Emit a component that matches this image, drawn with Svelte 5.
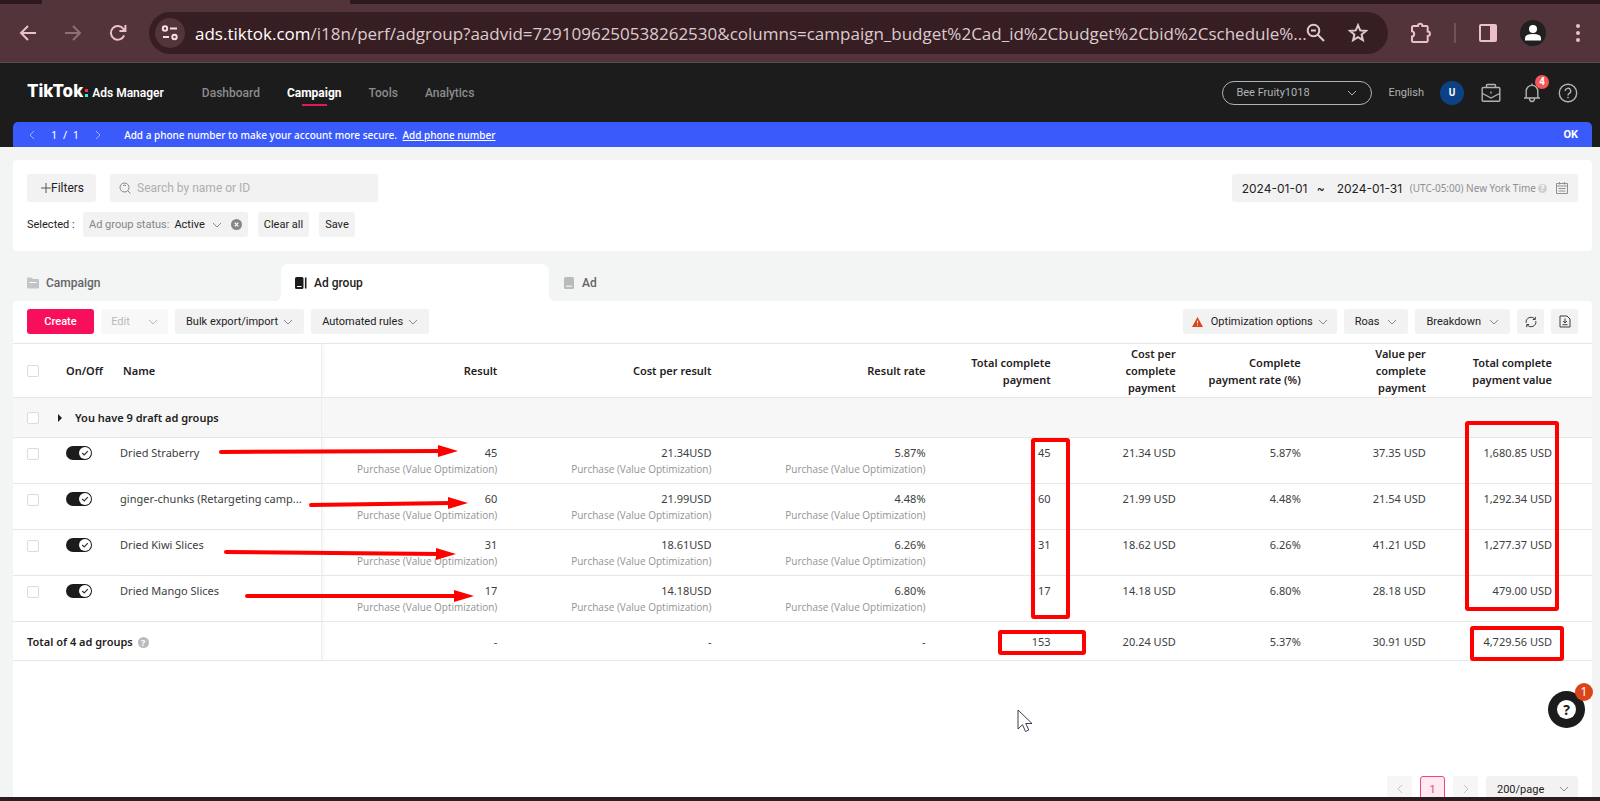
<script lang="ts">
	type Row = {
		name: string;
		result: string;
		cost: string;
		rate: string;
		cells: string[];
	};

	const navItems = ['Dashboard', 'Campaign', 'Tools', 'Analytics'];
	const goal = 'Purchase (Value Optimization)';
	const metricHeads = [
		'Total complete payment',
		'Cost per complete payment',
		'Complete payment rate (%)',
		'Value per complete payment',
		'Total complete payment value'
	];

	const rows: Row[] = [
		{
			name: 'Dried Straberry',
			result: '45',
			cost: '21.34USD',
			rate: '5.87%',
			cells: ['45', '21.34 USD', '5.87%', '37.35 USD', '1,680.85 USD']
		},
		{
			name: 'ginger-chunks (Retargeting camp...',
			result: '60',
			cost: '21.99USD',
			rate: '4.48%',
			cells: ['60', '21.99 USD', '4.48%', '21.54 USD', '1,292.34 USD']
		},
		{
			name: 'Dried Kiwi Slices',
			result: '31',
			cost: '18.61USD',
			rate: '6.26%',
			cells: ['31', '18.62 USD', '6.26%', '41.21 USD', '1,277.37 USD']
		},
		{
			name: 'Dried Mango Slices',
			result: '17',
			cost: '14.18USD',
			rate: '6.80%',
			cells: ['17', '14.18 USD', '6.80%', '28.18 USD', '479.00 USD']
		}
	];
	const totals = ['153', '20.24 USD', '5.37%', '30.91 USD', '4,729.56 USD'];

	// annotation marks, relative to the top left of the table
	const arrows = [
		{ x1: 208, y1: 109, x2: 445, y2: 108 },
		{ x1: 298, y1: 162, x2: 455, y2: 160 },
		{ x1: 213, y1: 209, x2: 443, y2: 211 },
		{ x1: 234, y1: 253, x2: 461, y2: 253 }
	];
	const boxes = [
		{ x: 1020, y: 97, w: 35, h: 177 },
		{ x: 1454, y: 80, w: 90, h: 186 },
		{ x: 987, y: 289, w: 84, h: 21 },
		{ x: 1459, y: 285, w: 90, h: 31 }
	];

	let search = $state('');
	let startDate = $state('2024-01-01');
	let endDate = $state('2024-01-31');
	let enabled = $state(rows.map(() => true));
</script>

{#snippet chevron()}
	<svg class="chevron" viewBox="0 0 10 10" width="10" height="10" aria-hidden="true">
		<path d="M1 3 5 7 9 3" />
	</svg>
{/snippet}

<div class="window">
	<div class="browser">
		<div class="tab-strip"></div>
		<div class="toolbar">
			<div class="nav-tools">
				<button class="tool" aria-label="Back">
					<svg viewBox="0 0 18 18" width="18" height="18"><path d="M17 9H2M9 2 2 9l7 7" /></svg>
				</button>
				<button class="tool dim" aria-label="Forward">
					<svg viewBox="0 0 18 18" width="18" height="18"><path d="M1 9h15M9 2l7 7-7 7" /></svg>
				</button>
				<button class="tool" aria-label="Reload">
					<svg viewBox="0 0 18 18" width="18" height="18">
						<path d="M15.2 11.4A6.9 6.9 0 1 1 14.4 4.8L16 6.4M16.4 1v6h-6" />
					</svg>
				</button>
			</div>
			<div class="url-bar">
				<button class="site-info" aria-label="Site information">
					<svg viewBox="0 0 18 16" width="18" height="16">
						<circle cx="4" cy="3.5" r="2.2" /><path d="M9 3.5h7M2 12h6" /><circle cx="13.5" cy="12" r="2.2" />
					</svg>
				</button>
				<p class="url">ads.tiktok.com<span>/i18n/perf/adgroup?aadvid=7291096250538262530&columns=campaign_budget%2Cad_id%2Cbudget%2Cbid%2Cschedule%...</span></p>
				<div class="url-tools">
					<button class="tool light" aria-label="Zoom">
						<svg viewBox="0 0 20 20" width="20" height="20"><circle cx="7.5" cy="7.5" r="5.8" /><path d="M5 7.5h5M11.8 11.8 18 18" /></svg>
					</button>
					<button class="tool light" aria-label="Bookmark this page">
						<svg viewBox="0 0 20 20" width="20" height="20">
							<path d="m10 2.2 2.2 5.2 5.7.5-4.3 3.7 1.3 5.6-4.9-3-4.9 3 1.3-5.6-4.3-3.7 5.7-.5z" />
						</svg>
					</button>
				</div>
			</div>
			<div class="browser-tools">
				<button class="tool" aria-label="Extensions">
					<svg viewBox="0 0 22 22" width="22" height="22">
						<path d="M2 5.5Q2 4 3.500 4H8a2.200 2.200 0 0 1 4.400 0h4.100q1.200 0 1.200 1.200v4.300a2.200 2.200 0 0 1 0 4.400v4.900q0 1.200-1.200 1.200H3.200Q2 20 2 18.800v-4.200a2.700 2.700 0 0 0 0-5.300z" />
					</svg>
				</button>
				<span class="divider"></span>
				<button class="tool" aria-label="Side panel">
					<svg viewBox="0 0 20 20" width="20" height="20"><rect x="2" y="2" width="16" height="16" rx="1" /><path class="solid" d="M12 2h6v16h-6z" /></svg>
				</button>
				<button class="tool" aria-label="Profile">
					<svg class="profile" viewBox="0 0 26 26" width="26" height="26">
						<circle cx="13" cy="13" r="13" fill="#202020" /><circle cx="13" cy="9" r="4" fill="#fff" />
						<path d="M5 20.5V18q0-4 8-4t8 4v2.500z" fill="#fff" />
					</svg>
				</button>
			</div>
			<button class="tool" aria-label="Menu">
				<svg class="dots" viewBox="0 0 6 20" width="6" height="20"><circle cx="3" cy="3" r="2" /><circle cx="3" cy="10" r="2" /><circle cx="3" cy="17" r="2" /></svg>
			</button>
		</div>
	</div>

	<header>
		<div class="masthead">
			<a class="logo" href="#home"><b>TikTok</b><i></i><span>Ads Manager</span></a>
			<nav>
				{#each navItems as item}
					<a href={`#${item.toLowerCase()}`} class:current={item === 'Campaign'}>{item}</a>
				{/each}
			</nav>
			<div class="account">
				<label class="account-picker">
					<select aria-label="Account"><option>Bee Fruity1018</option></select>
					{@render chevron()}
				</label>
				<button class="lang">English</button>
				<button class="avatar">U</button>
				<button class="head-icon" aria-label="Business center">
					<svg viewBox="0 0 20 20" width="20" height="20">
						<path d="M5.500 4.500v-2q0-1 1-1h7q1 0 1 1v2M2.200 4.500h15.600q1 0 1 1v11.700q0 1-1 1H2.200q-1 0-1-1V5.500q0-1 1-1zM1.500 10.500 10 15l8.500-4.500M10 8.500v2" />
					</svg>
				</button>
				<button class="head-icon bell" aria-label="Notifications">
					<svg viewBox="0 0 18 20" width="18" height="20">
						<path d="M3.200 15V8.200a5.800 5.800 0 0 1 11.600 0V15M1 15h16M6.500 15.500a2.500 3 0 0 0 5 0M9 2.200V.5" />
					</svg>
					<span class="count">4</span>
				</button>
				<button class="head-icon" aria-label="Help">
					<svg viewBox="0 0 20 20" width="20" height="20">
						<circle cx="10" cy="10" r="8.700" /><path d="M7.300 8a2.700 2.700 0 1 1 4 2.400q-1.300.7-1.300 2M10 13.700v1.500" />
					</svg>
				</button>
			</div>
		</div>
		<div class="notice">
			<button aria-label="Previous notice"><svg viewBox="0 0 10 10" width="10" height="10"><path d="M7 1 3 5l4 4" /></svg></button>
			<span class="pos">1&nbsp; / &nbsp;1</span>
			<button aria-label="Next notice"><svg viewBox="0 0 10 10" width="10" height="10"><path d="m3 1 4 4-4 4" /></svg></button>
			<p>Add a phone number to make your account more secure. <a href="#phone">Add phone number</a></p>
			<button class="ok">OK</button>
		</div>
	</header>

	<main>
		<section class="filters">
			<div class="filter-row">
				<button class="filter-btn">
					<svg viewBox="0 0 10 10" width="10" height="10"><path d="M5 0v10M0 5h10" /></svg>Filters
				</button>
				<label class="search">
					<svg viewBox="0 0 12 12" width="12" height="12"><circle cx="5.500" cy="5.500" r="4.500" /><path d="m8.800 8.800 2.700 2.700M4 3.600q1.500-.8 3 0" /></svg>
					<input type="text" placeholder="Search by name or ID" aria-label="Search by name or ID" bind:value={search} />
				</label>
				<div class="dates">
					<input type="text" aria-label="Start date" bind:value={startDate} />
					<span>~</span>
					<input type="text" aria-label="End date" bind:value={endDate} />
					<small>(UTC-05:00) New York Time</small>
					<i class="hint">?</i>
					<svg class="calendar" viewBox="0 0 12 12" width="12" height="12"><path d="M.5 1.500h11v10H.5zM.5 4h11M3.500 0v2.500M8.500 0v2.500M2.500 6.500h7M2.500 9h7" /></svg>
				</div>
			</div>
			<div class="selected-row">
				<span>Selected :</span>
				<div class="chip">
					<em>Ad group status:</em>
					<button class="plain">Active {@render chevron()}</button>
					<button class="plain" aria-label="Remove filter">
						<svg viewBox="0 0 12 12" width="11" height="11"><circle cx="6" cy="6" r="6" fill="#848687" /><path d="m4 4 4 4M8 4 4 8" stroke="#fff" stroke-width="1.400" /></svg>
					</button>
				</div>
				<button class="mini">Clear all</button>
				<button class="mini">Save</button>
			</div>
		</section>

		<div class="tabs">
			<a href="#campaigns">
				<svg viewBox="0 0 12 12" width="12" height="12"><path d="M0 1.500Q0 .5 1 .5h3.500L6 2h5q1 0 1 1v7.500q0 1-1 1H1q-1 0-1-1z" fill="#c3c4c5" /><path d="M2.500 5.500h7" stroke="#fff" /></svg>
				Campaign
			</a>
			<a class="active" href="#adgroups">
				<svg viewBox="0 0 12 12" width="12" height="12"><rect width="8.500" height="12" rx="1.500" fill="#1c1c1c" /><path d="M2 9.500h4.500" stroke="#fff" /><path d="M10.700.5v11" stroke="#1c1c1c" stroke-width="1.600" /></svg>
				Ad group
			</a>
			<a href="#ads">
				<svg viewBox="0 0 12 12" width="12" height="12"><rect x="1" width="10" height="12" rx="1.500" fill="#b9babb" /><path d="M3 9.200h6" stroke="#fff" /></svg>
				Ad
			</a>
		</div>

		<section class="content">
			<div class="actions">
				<button class="create">Create</button>
				<button class="edit" disabled>Edit {@render chevron()}</button>
				<button class="wide">Bulk export/import {@render chevron()}</button>
				<button class="wide">Automated rules {@render chevron()}</button>
				<span class="spacer"></span>
				<button class="warn">
					<svg viewBox="0 0 12 11" width="11" height="10"><path d="M6 0 12 11H0z" fill="#d9441b" /><path d="M6 4v3M6 8.300v1.200" stroke="#fff" /></svg>
					Optimization options {@render chevron()}
				</button>
				<button class="wide roomy">Roas {@render chevron()}</button>
				<button class="wide roomy">Breakdown {@render chevron()}</button>
				<button class="square" aria-label="Refresh">
					<svg viewBox="0 0 12 12" width="12" height="12"><path d="M1.200 7A4.900 4.900 0 0 1 9.800 3M10.300.8v2.700H7.800M10.800 5A4.900 4.900 0 0 1 2.200 9M1.700 11.200V8.500h2.500" /></svg>
				</button>
				<button class="square" aria-label="Export">
					<svg viewBox="0 0 12 13" width="12" height="13"><path d="M1 1h7l3 3v8H1zM6 3.500V8M4 6l2 2 2-2M3.500 9.700h5" /></svg>
				</button>
			</div>

			<div class="table-wrap">
				<table>
					<colgroup>
						<col class="c-check" /><col class="c-toggle" /><col class="c-name" />
						<col class="c-result" /><col class="c-wide" /><col class="c-wide" />
						<col class="c-metric" /><col class="c-metric" /><col class="c-metric" /><col class="c-metric" /><col class="c-last" />
					</colgroup>
					<thead>
						<tr>
							<th><input type="checkbox" aria-label="Select all" /></th>
							<th class="onoff">On/Off</th>
							<th class="name pinned">Name</th>
							<th class="num">Result</th>
							<th class="num">Cost per result</th>
							<th class="num">Result rate</th>
							{#each metricHeads as head}
								<th class="num">{head}</th>
							{/each}
						</tr>
					</thead>
					<tbody>
						<tr class="draft">
							<td><input type="checkbox" aria-label="Select drafts" /></td>
							<td class="pinned" colspan="2">
								<button class="expand">
									<svg viewBox="0 0 4 8" width="4" height="8"><path d="m0 0 4 4-4 4z" /></svg>You have 9 draft ad groups
								</button>
							</td>
							<td colspan="8"></td>
						</tr>
						{#each rows as row, i}
							<tr class="item">
								<td><input type="checkbox" aria-label={`Select ${row.name}`} /></td>
								<td>
									<label class="switch">
										<input type="checkbox" role="switch" aria-label={`${row.name} on or off`} bind:checked={enabled[i]} />
										<svg viewBox="0 0 26 14" width="26" height="14">
											<rect width="26" height="14" rx="7" fill="#1c1c1c" /><circle cx="19" cy="7" r="6" fill="#fff" />
											<path d="m16.200 7 2 2 3.600-3.800" stroke="#333" stroke-width="1.200" />
										</svg>
									</label>
								</td>
								<td class="pinned">{row.name}</td>
								{#each [row.result, row.cost, row.rate] as value}
									<td class="num">{value}<small>{goal}</small></td>
								{/each}
								{#each row.cells as value}
									<td class="num">{value}</td>
								{/each}
							</tr>
						{/each}
					</tbody>
					<tfoot>
						<tr>
							<td class="pinned total" colspan="3">Total of 4 ad groups <i class="hint big">?</i></td>
							<td class="num">-</td>
							<td class="num">-</td>
							<td class="num">-</td>
							{#each totals as value}
								<td class="num">{value}</td>
							{/each}
						</tr>
					</tfoot>
				</table>

				<svg class="marks" aria-hidden="true">
					{#each arrows as a}
						<line x1={a.x1} y1={a.y1} x2={a.x2 - 16} y2={a.y2} />
						<polygon points={`${a.x2 - 20},${a.y2 - 6} ${a.x2},${a.y2} ${a.x2 - 20},${a.y2 + 6}`} />
					{/each}
					{#each boxes as b}
						<rect x={b.x} y={b.y} width={b.w} height={b.h} rx="1" />
					{/each}
				</svg>
			</div>

			<div class="pager">
				<button class="page off" aria-label="Previous page"><svg viewBox="0 0 10 10" width="10" height="10"><path d="M7 1 3 5l4 4" /></svg></button>
				<button class="page on">1</button>
				<button class="page off" aria-label="Next page"><svg viewBox="0 0 10 10" width="10" height="10"><path d="m3 1 4 4-4 4" /></svg></button>
				<label class="page-size">
					<select aria-label="Rows per page"><option>200/page</option></select>
					{@render chevron()}
				</label>
			</div>
		</section>

		<button class="support" aria-label="Support">
			<span class="bubble">?</span>
			<span class="badge">1</span>
		</button>
		<svg class="cursor" viewBox="0 0 16 24" width="16" height="24" aria-hidden="true">
			<path d="M1 1v19l4.500-4.300 3 6.800 3.300-1.500-3-6.500H15z" />
		</svg>
	</main>
	<div class="taskbar"></div>
</div>

<style>
	:global(body) {
		background: #f3f4f4;
	}

	.window {
		display: flex;
		flex-direction: column;
		height: 100vh;
		font-family: 'Noto Sans', 'Open Sans', sans-serif;
		font-size: 11px;
		color: #1f2122;
	}

	button,
	input,
	select {
		font: inherit;
		color: inherit;
		margin: 0;
		padding: 0;
		border: 0;
		background: none;
		white-space: nowrap;
	}

	a {
		color: inherit;
		text-decoration: none;
	}

	p {
		margin: 0;
	}

	svg {
		fill: none;
		stroke: none;
		flex: none;
	}

	.chevron {
		stroke: #8a8b8d;
	}

	/* browser bar */
	.browser {
		background: #52343a;
		border-bottom: 1px solid #584b4d;
	}

	.tab-strip {
		height: 4px;
		background: linear-gradient(90deg, #2e191e 42px, #52343a 42px 350px, #2e191e 350px);
	}

	.toolbar {
		display: flex;
		align-items: center;
		height: 58px;
		padding: 0 19px;
	}

	.nav-tools,
	.url-tools,
	.browser-tools {
		display: flex;
		align-items: center;
		gap: 27px;
	}

	.url-tools,
	.browser-tools {
		gap: 22px;
	}

	.browser-tools {
		margin-right: 29px;
	}

	.tool {
		display: flex;
	}

	.tool svg {
		stroke: #eebfc8;
		stroke-width: 2;
	}

	.tool .solid,
	.tool .dots {
		fill: #eebfc8;
		stroke: none;
	}

	.tool .profile {
		stroke: none;
	}

	.tool.dim svg {
		stroke: #8f6f76;
	}

	.tool.light svg {
		stroke: #dccbce;
	}

	.url-bar {
		flex: 1;
		display: flex;
		align-items: center;
		min-width: 0;
		height: 42px;
		padding: 0 20px 0 6px;
		margin: 0 22px;
		border-radius: 21px;
		background: #371e23;
	}

	.site-info {
		display: flex;
		align-items: center;
		justify-content: center;
		width: 30px;
		height: 30px;
		border-radius: 50%;
		background: #52343a;
	}

	.site-info svg {
		stroke: #f5dfe3;
		stroke-width: 2;
	}

	.url {
		flex: 1;
		min-width: 0;
		white-space: nowrap;
		margin-left: 10px;
		font-family: 'Open Sans', sans-serif;
		font-size: 17px;
		color: #fff;
	}

	.url span {
		color: #dccbce;
	}

	.divider {
		width: 2px;
		height: 20px;
		background: #70535a;
	}

	/* header */
	header {
		background: #1c1c1c;
		padding: 0 8px 0 13px;
		font-family: Roboto, 'Open Sans', sans-serif;
	}

	.masthead {
		display: flex;
		align-items: center;
		height: 59px;
		padding: 0 14px;
	}

	.logo {
		display: flex;
		align-items: baseline;
		padding-bottom: 3px;
		color: #fff;
		font-size: 12px;
		font-weight: 600;
	}

	.logo b {
		font-family: Inter, sans-serif;
		font-size: 17px;
		font-weight: 800;
	}

	.logo i {
		width: 3px;
		height: 8px;
		margin: 0 4px 0 2px;
		background: linear-gradient(#fe2c55 3px, transparent 3px 5px, #25f4ee 5px);
	}

	nav {
		display: flex;
		gap: 27px;
		margin-left: 38px;
		font-size: 12px;
		font-weight: 500;
		color: #8b8c8d;
	}

	nav a {
		position: relative;
	}

	nav .current {
		color: #fff;
		font-weight: 700;
	}

	nav .current::after {
		content: '';
		position: absolute;
		left: 15px;
		right: 15px;
		bottom: -6px;
		height: 2px;
		background: #e0195b;
	}

	.account {
		display: flex;
		align-items: center;
		margin-left: auto;
		color: #b1b2b3;
	}

	.account-picker {
		display: flex;
		align-items: center;
		width: 121px;
		height: 22px;
		padding: 0 14px 0 13px;
		border: 1px solid #b1b2b3;
		border-radius: 12px;
	}

	select {
		flex: 1;
		min-width: 0;
		appearance: none;
	}

	.account-picker .chevron {
		stroke: #b1b2b3;
	}

	.lang {
		margin: 0 16px;
	}

	.avatar {
		width: 24px;
		height: 24px;
		margin-right: 17px;
		border-radius: 50%;
		background: #0d4186;
		color: #fff;
		font-size: 10px;
		font-weight: 700;
	}

	.head-icon {
		position: relative;
		display: flex;
	}

	.head-icon svg {
		stroke: #b1b2b3;
		stroke-width: 1.4;
	}

	.bell {
		margin: 0 17px 0 22px;
	}

	.count {
		position: absolute;
		top: -8px;
		right: -8px;
		width: 14px;
		height: 14px;
		border-radius: 50%;
		background: #f65656;
		color: #fff;
		font-size: 10px;
		font-weight: 700;
		line-height: 14px;
	}

	.notice {
		display: flex;
		align-items: center;
		height: 25px;
		padding: 0 14px;
		border-radius: 5px 5px 0 0;
		background: #3b5afb;
		color: #fff;
		font-family: Roboto, sans-serif;
		font-size: 10px;
		font-weight: 600;
	}

	.notice svg {
		display: block;
		stroke: #a4b2fd;
	}

	.pos {
		margin: 0 14px;
		font-family: 'Noto Sans', sans-serif;
		font-size: 11px;
		font-weight: 400;
	}

	.notice p {
		margin-left: 21px;
		font-family: 'Noto Sans', sans-serif;
		font-weight: 500;
	}

	.notice a {
		margin-left: 3px;
		text-decoration: underline;
	}

	.ok {
		margin-left: auto;
		font-size: 11px;
		font-weight: 700;
	}

	/* filters */
	main {
		flex: 1;
		min-height: 0;
		position: relative;
		display: flex;
		flex-direction: column;
		padding: 13px 8px 0 13px;
		overflow: hidden;
		background: #f3f4f4;
	}

	.filters {
		padding: 14px;
		border-radius: 4px;
		background: #fff;
		font-family: Roboto, 'Open Sans', sans-serif;
	}

	.filter-row,
	.selected-row {
		display: flex;
		align-items: center;
	}

	.filter-btn,
	.search,
	.dates {
		display: flex;
		align-items: center;
		height: 28px;
		border-radius: 3px;
		background: #f2f2f2;
	}

	.filter-btn {
		padding: 0 12px 0 14px;
		font-size: 12px;
	}

	.filter-btn svg {
		stroke: #555;
	}

	.search {
		width: 268px;
		margin-left: 14px;
		padding: 0 9px;
		box-sizing: border-box;
		font-size: 12px;
	}

	.search svg {
		margin-right: 6px;
		stroke: #848687;
	}

	.search input {
		flex: 1;
		min-width: 0;
	}

	.search input::placeholder {
		color: #aeafb0;
	}

	.dates {
		margin-left: auto;
		padding: 0 10px;
		font-family: Inter, sans-serif;
		font-size: 12px;
	}

	.dates input {
		width: 67px;
	}

	.dates span {
		width: 28px;
		padding-left: 8px;
		box-sizing: border-box;
	}

	.dates small {
		margin-left: 6px;
		font-family: 'Noto Sans', sans-serif;
		font-size: 10px;
		color: #8f9091;
	}

	.hint {
		display: inline-block;
		width: 9px;
		height: 9px;
		margin-left: 2px;
		border-radius: 50%;
		background: #cfd0d0;
		color: #fff;
		font-size: 7px;
		font-style: normal;
		font-weight: 700;
		line-height: 9px;
		text-align: center;
	}

	.hint.big {
		width: 11px;
		height: 11px;
		background: #b9baba;
		font-size: 9px;
		line-height: 11px;
	}

	.calendar {
		margin-left: 9px;
		stroke: #8f9091;
	}

	.selected-row {
		height: 25px;
		margin-top: 10px;
	}

	.selected-row > span {
		width: 56px;
	}

	.chip,
	.mini {
		display: flex;
		align-items: center;
		height: 25px;
		margin-right: 10px;
		padding: 0 6px;
		border-radius: 3px;
		background: #f2f2f2;
	}

	.chip em {
		margin-right: 5px;
		color: #848687;
		font-style: normal;
	}

	.plain {
		display: flex;
		align-items: center;
		gap: 7px;
	}

	.plain + .plain {
		margin-left: 9px;
	}

	/* tabs */
	.tabs {
		display: flex;
		margin-top: 13px;
	}

	.tabs a {
		display: flex;
		align-items: center;
		gap: 7px;
		width: 268px;
		height: 37px;
		padding-left: 14px;
		box-sizing: border-box;
		font-family: Roboto, sans-serif;
		font-size: 12px;
		font-weight: 500;
		color: #626466;
	}

	.tabs .active {
		position: relative;
		border-radius: 8px 8px 0 0;
		background: #fff;
		color: #1f2122;
	}

	.tabs .active::before,
	.tabs .active::after {
		content: '';
		position: absolute;
		bottom: 0;
		width: 6px;
		height: 6px;
	}

	.tabs .active::before {
		right: 100%;
		background: radial-gradient(circle at 0 0, #f3f4f4 6px, #fff 6px);
	}

	.tabs .active::after {
		left: 100%;
		background: radial-gradient(circle at 100% 0, #f3f4f4 6px, #fff 6px);
	}

	/* content */
	.content {
		flex: 1;
		display: flex;
		flex-direction: column;
		border-radius: 4px 4px 0 0;
		background: #fff;
	}

	.actions {
		display: flex;
		gap: 7px;
		padding: 8px 14px 9px;
		font-family: Roboto, sans-serif;
	}

	.actions button {
		display: flex;
		align-items: center;
		justify-content: center;
		gap: 5px;
		height: 25px;
		border-radius: 3px;
		background: #f2f2f2;
	}

	.actions .create {
		width: 67px;
		background: #f80f5c;
		color: #fff;
		font-weight: 500;
	}

	.actions .edit {
		gap: 18px;
		width: 67px;
		background: #f8f8f8;
		color: #b7b8b9;
	}

	.actions .edit .chevron {
		stroke: #b7b8b9;
	}

	.actions .wide {
		padding: 0 11px;
	}

	.actions .roomy {
		gap: 8px;
	}

	.actions .warn {
		padding: 0 9px;
	}

	.warn svg:first-child {
		margin-right: 3px;
	}

	.actions .square {
		width: 27px;
	}

	.square svg {
		stroke: #3c3e40;
	}

	.spacer {
		flex: 1;
	}

	/* table */
	.table-wrap {
		position: relative;
	}

	table {
		width: 100%;
		table-layout: fixed;
		border-collapse: separate;
		border-spacing: 0;
		border-top: 1px solid #e6e7e7;
	}

	.c-check {
		width: 53px;
	}

	.c-toggle {
		width: 54px;
	}

	.c-name {
		width: 202px;
	}

	.c-result {
		width: 189px;
	}

	.c-wide {
		width: 214px;
	}

	.c-metric {
		width: 125px;
	}

	.c-last {
		width: 152px;
	}

	th,
	td {
		padding: 0;
		border-bottom: 1px solid #e6e7e7;
		text-align: left;
		vertical-align: middle;
		font-weight: 400;
	}

	th {
		height: 53px;
		line-height: 17px;
		font-weight: 600;
	}

	.name {
		padding-left: 3px;
	}

	.num {
		padding: 0 14px 0 18px;
		text-align: right;
	}

	.num:last-child {
		padding-right: 40px;
	}

	.pinned {
		border-right: 1px solid #eee;
		box-shadow: 2px 0 2px rgba(0, 0, 0, 0.03);
	}

	td input,
	th input {
		display: block;
		appearance: none;
		width: 12px;
		height: 12px;
		margin-left: 14px;
		border: 1px solid #dadbdb;
		border-radius: 2px;
		background: #fff;
	}

	.draft td {
		height: 39px;
		background: #f7f7f7;
	}

	.expand {
		display: flex;
		align-items: center;
		gap: 13px;
		margin-left: -8px;
		font-weight: 600;
	}

	.expand svg {
		fill: #1f2122;
	}

	.item td {
		height: 39px;
		padding-top: 6px;
		line-height: 18px;
		vertical-align: top;
		color: #3c3e40;
	}

	.item td > input {
		margin-top: 4px;
	}

	.item small {
		display: block;
		font-family: 'Open Sans', sans-serif;
		font-size: 10px;
		line-height: 15px;
		color: #929394;
	}

	.switch {
		position: relative;
		display: block;
		height: 14px;
		margin-top: 2px;
	}

	.switch input {
		position: absolute;
		opacity: 0;
	}

	.switch svg {
		display: block;
	}

	tfoot td {
		height: 38px;
		color: #3c3e40;
	}

	tfoot .total {
		padding-left: 14px;
		font-weight: 600;
		color: #1f2122;
	}

	.marks {
		position: absolute;
		inset: 0;
		width: 100%;
		height: 100%;
		pointer-events: none;
	}

	.marks line,
	.marks rect {
		stroke: #fe0000;
		stroke-width: 4;
		stroke-linecap: round;
	}

	.marks polygon {
		fill: #fe0000;
	}

	/* pager runs past the bottom edge of the pane */
	.pager {
		display: flex;
		justify-content: flex-end;
		gap: 8px;
		margin: auto 14px -5px 0;
		font-family: Roboto, sans-serif;
	}

	.page {
		display: flex;
		align-items: center;
		justify-content: center;
		width: 25px;
		height: 26px;
		border-radius: 3px;
		background: #f6f6f6;
	}

	.page svg {
		stroke: #c3c4c5;
	}

	.page.on {
		border: 1px solid #f0467f;
		background: #feeaf0;
		color: #f0467f;
	}

	.page-size {
		display: flex;
		align-items: center;
		width: 92px;
		height: 26px;
		padding: 0 9px 0 11px;
		box-sizing: border-box;
		border-radius: 3px;
		background: #f2f2f2;
	}

	.support {
		position: absolute;
		right: 15px;
		bottom: 69px;
		width: 37px;
		height: 37px;
		border-radius: 50%;
		background: #1c1c1c;
	}

	.bubble {
		display: block;
		width: 19px;
		height: 19px;
		margin: auto;
		border-radius: 50%;
		background: #fff;
		color: #1c1c1c;
		font-size: 14px;
		font-weight: 700;
		line-height: 19px;
	}

	.badge {
		position: absolute;
		top: -8px;
		right: -8px;
		width: 18px;
		height: 18px;
		border-radius: 50%;
		background: #dc4519;
		color: #fff;
		font-size: 12px;
		line-height: 18px;
	}

	.cursor {
		position: absolute;
		left: 1017px;
		top: 562px;
		fill: #fff;
		stroke: #3c3e50;
		pointer-events: none;
	}

	.taskbar {
		height: 4px;
		background: #2b1d1e;
	}
</style>
